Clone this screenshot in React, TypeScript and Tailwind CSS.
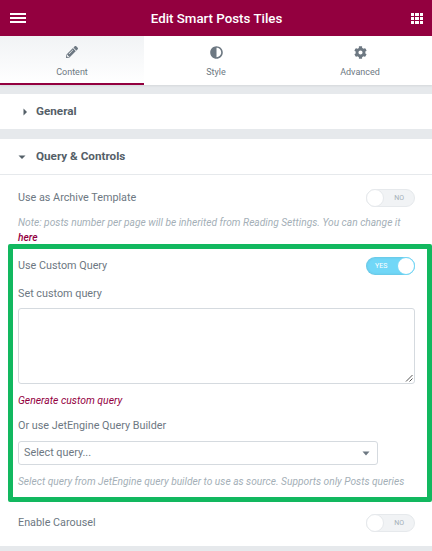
import React from 'react';
import { FaPencilAlt, FaAdjust, FaCog } from 'react-icons/fa';

const Toggle: React.FC<{ on?: boolean }> = ({ on }) =>
  on ? (
    <div className="relative flex h-[18px] w-[49px] items-center rounded-full bg-[#71d7f7] pl-[9px] shadow-[inset_0_0_3px_rgba(0,0,0,0.15)]">
      <span className="text-[7px] uppercase text-white">Yes</span>
      <span className="absolute right-0 top-0 h-[18px] w-[18px] rounded-full border border-[#71d7f7] bg-white" />
    </div>
  ) : (
    <div className="relative flex h-[18px] w-[49px] items-center justify-end rounded-full border border-[#e6e9ec] bg-[#f1f3f5] pr-[10px]">
      <span className="text-[7px] uppercase text-[#a4afb7]">No</span>
      <span className="absolute -left-px -top-px h-[18px] w-[18px] rounded-full border border-[#e6e9ec] bg-white" />
    </div>
  );

const Caret: React.FC<{ open?: boolean }> = ({ open }) => (
  <svg width="8" height="8" viewBox="0 0 8 8" className="text-[#556068]">
    <path d={open ? 'M0.5 2.5h7L4 6z' : 'M2.5 0.5v7L6 4z'} fill="currentColor" />
  </svg>
);

const Tab: React.FC<{ label: string; active?: boolean; icon: React.ReactNode }> = ({ label, active, icon }) => (
  <div
    className={`flex h-[49px] w-[144px] flex-col items-center pt-[9px] ${
      active ? 'border-b-2 border-[#93003f] bg-gradient-to-b from-[#f1f3f5] to-white' : ''
    }`}
  >
    <div className="flex h-[14px] items-center justify-center text-[#6d7882]">{icon}</div>
    <span className="mt-[6px] text-[9px] leading-[14px] text-[#6d7882]">{label}</span>
  </div>
);

const App: React.FC = () => {
  return (
    <div className="relative h-[551px] w-[432px] overflow-hidden bg-[#e6e9ec] font-['Roboto',sans-serif]">
      {/* header */}
      <div className="flex h-[36px] items-center justify-between bg-[#93003f] pl-[10px] pr-[9px] text-white">
        <div className="flex w-[16px] flex-col gap-[2px]">
          <span className="h-[2px] bg-white" />
          <span className="h-[2px] bg-white" />
          <span className="h-[2px] bg-white" />
        </div>
        <span className="mr-[4px] text-[13.3px] font-medium leading-[17px]">Edit Smart Posts Tiles</span>
        <div className="grid w-[12px] grid-cols-3 gap-px">
          {Array.from({ length: 9 }).map((_, i) => (
            <span key={i} className="h-[3px] bg-white" />
          ))}
        </div>
      </div>

      {/* tabs */}
      <div className="flex bg-white shadow-[0_1px_2px_rgba(0,0,0,0.08)]">
        <Tab label="Content" active icon={<FaPencilAlt size={12} />} />
        <Tab label="Style" icon={<FaAdjust size={13} />} />
        <Tab label="Advanced" icon={<FaCog size={13} />} />
      </div>

      {/* general */}
      <div className="mt-[9px] flex h-[36px] items-center gap-[7px] border-b border-[#e6e9ec] bg-white pl-[21px]">
        <Caret />
        <span className="text-[11.7px] font-bold text-[#556068]">General</span>
      </div>

      {/* query & controls */}
      <div className="relative mt-[9px] h-[407px] bg-white">
        <div className="flex h-[36px] items-center gap-[10px] border-b border-[#e6e9ec] pl-[18px]">
          <Caret open />
          <span className="text-[11.7px] font-bold text-[#556068]">Query &amp; Controls</span>
        </div>

        <div className="px-[18px] pr-[17px] pt-[14px] text-[10.8px] leading-[14px] text-[#6d7882]">
          <div className="flex h-[18px] items-center justify-between">
            <span>Use as Archive Template</span>
            <Toggle />
          </div>
          <p className="mt-[8px] text-[10.2px] italic leading-[15px] text-[#a4afb7]">
            Note: posts number per page will be inherited from Reading Settings. You can change it
            <span className="block font-medium text-[#93003f]">here</span>
          </p>

          <div className="mt-[12px] flex h-[18px] items-center justify-between">
            <span>Use Custom Query</span>
            <Toggle on />
          </div>

          <div className="mt-[12px]">Set custom query</div>
          <div className="relative mt-[7px] h-[76px] rounded-[3px] border border-[#d5dadf] bg-white">
            <svg width="8" height="8" viewBox="0 0 8 8" className="absolute bottom-px right-px text-[#555]">
              <path d="M7.5 1L1 7.5M7.5 4.5L4.5 7.5" stroke="currentColor" strokeWidth="1" />
            </svg>
          </div>
          <div className="mt-[10px] text-[10.4px] italic leading-[14px] text-[#93003f]">Generate custom query</div>

          <div className="mt-[11px]">Or use JetEngine Query Builder</div>
          <div className="mt-[8px] flex h-[24px] w-[360px] items-center justify-between rounded-[3px] border border-[#d5dadf] pl-[5px] pr-[7px]">
            <span>Select query...</span>
            <svg width="8" height="5" viewBox="0 0 8 5" className="text-[#6d7882]">
              <path d="M0.5 0.5h7L4 4.5z" fill="currentColor" />
            </svg>
          </div>
          <p className="mt-[10px] text-[10.2px] italic leading-[14px] text-[#a4afb7]">
            Select query from JetEngine query builder to use as source. Supports only Posts queries
          </p>

          <div className="mt-[25px] flex h-[18px] items-center justify-between">
            <span>Enable Carousel</span>
            <Toggle />
          </div>
        </div>

        {/* green highlight drawn over the panel */}
        <div className="absolute left-[8px] top-[105px] h-[258px] w-[424px] rounded-[2px] border-[5px] border-[#12b85f]" />
      </div>
    </div>
  );
};

export default App;
